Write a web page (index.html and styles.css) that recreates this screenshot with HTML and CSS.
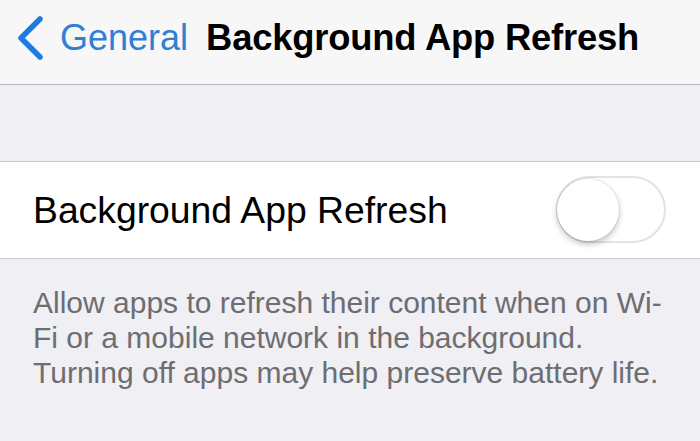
FILE: index.html
```html
<!DOCTYPE html>
<html lang="en">
<head>
  <meta charset="UTF-8" />
  <title>Background App Refresh</title>
  <link rel="stylesheet" href="styles.css">
</head>
<body>

<div class="navbar">
  <a class="back" href="#">
    <svg class="chevron" width="30" height="46" viewBox="0 0 30 46">
      <polyline points="25,4 6,23 25,42" fill="none" stroke="#1f7ae0" stroke-width="5.5" stroke-linecap="round" stroke-linejoin="round" />
    </svg>
    <span class="back-label">General</span>
  </a>
  <div class="nav-title">Background App Refresh</div>
</div>

<div class="group">
  <div class="cell">
    <span class="cell-label">Background App Refresh</span>
    <div class="switch"><div class="knob"></div></div>
  </div>
</div>

<div class="footer">
  Allow apps to refresh their content when on Wi-<br />
  Fi or a mobile network in the background.<br />
  Turning off apps may help preserve battery life.
</div>

</body>
</html>
```

FILE: styles.css
```css
body {
  margin: 0;
  padding: 0;
  background: #efeff4;
  font-family: "Liberation Sans", Arial, sans-serif;
  color: #000;
  width: 700px;
  height: 441px;
  overflow: hidden;
}
.navbar {
  height: 76px;
  padding-bottom: 8px;
  background: #f7f7f8;
  border-bottom: 1px solid #b8b8bc;
  display: flex;
  align-items: center;
  padding-left: 15px;
}
.back {
  display: flex;
  align-items: center;
  text-decoration: none;
}
.chevron {
  display: block;
  margin-top: 0;
}
.back-label {
  margin-left: 15px;
  font-size: 36px;
  color: #2f7fd3;
}
.nav-title {
  margin-left: 18px;
  font-size: 36.4px;
  font-weight: bold;
  letter-spacing: -0.2px;
}
.group {
  margin-top: 76px;
  background: #fff;
  border-top: 1px solid #c8c7cc;
  border-bottom: 1px solid #c8c7cc;
}
.cell {
  height: 96px;
  display: flex;
  align-items: center;
  justify-content: space-between;
  padding: 0 34px 0 33px;
}
.cell-label {
  font-size: 37.3px;
}
.switch {
  width: 106px;
  height: 63px;
  border: 2px solid #e3e3e6;
  border-radius: 34px;
  background: #fff;
  position: relative;
  margin-top: -2px;
}
.knob {
  position: absolute;
  left: -1px;
  top: 1px;
  width: 62px;
  height: 62px;
  border-radius: 50%;
  background: #fff;
  box-shadow: 0 3px 6px rgba(0, 0, 0, 0.25), 0 0 0 1px rgba(0, 0, 0, 0.06);
}
.footer {
  padding: 26px 20px 0 33px;
  font-size: 30px;
  line-height: 35px;
  color: #6d6d72;
}
```
